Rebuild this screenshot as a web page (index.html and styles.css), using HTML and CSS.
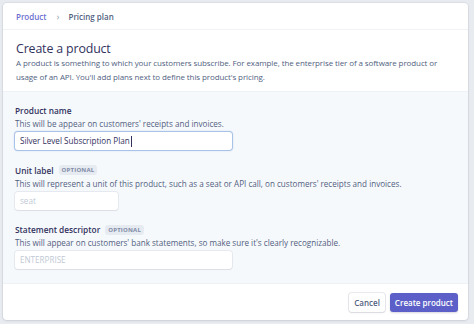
FILE: index.html
```html
<!DOCTYPE html>
<html>
<head>
<meta charset="utf-8">
<link rel="stylesheet" href="styles.css">
</head>
<body>
<div class="card">
  <div class="crumbs">
    <span class="crumb-link">Product</span>
    <span class="crumb-sep">›</span>
    <span class="crumb-current">Pricing plan</span>
  </div>
  <div class="head">
    <h1 class="title">Create a product</h1>
    <p class="intro">A product is something to which your customers subscribe. For example, the enterprise tier of a software product or usage of an API. You'll add plans next to define this product's pricing.</p>
  </div>
  <div class="form">
    <div class="field">
      <div class="label">Product name</div>
      <div class="hint">This will be appear on customers' receipts and invoices.</div>
      <div class="input input-wide input-focus">Silver Level Subscription Plan<span class="caret"></span></div>
    </div>
    <div class="field">
      <div class="label">Unit label <span class="badge">OPTIONAL</span></div>
      <div class="hint">This will represent a unit of this product, such as a seat or API call, on customers' receipts and invoices.</div>
      <div class="input input-narrow placeholder">seat</div>
    </div>
    <div class="field">
      <div class="label">Statement descriptor <span class="badge">OPTIONAL</span></div>
      <div class="hint">This will appear on customers' bank statements, so make sure it's clearly recognizable.</div>
      <div class="input input-wide placeholder">ENTERPRISE</div>
    </div>
  </div>
  <div class="footer">
    <button class="btn btn-cancel">Cancel</button>
    <button class="btn btn-primary">Create product</button>
  </div>
</div>
</body>
</html>
```
FILE: styles.css
```css
html, body {
  margin: 0;
  padding: 0;
}
body {
  background: #e8ecf1;
  font-family: "Open Sans", "Noto Sans", sans-serif;
  color: #32325d;
  width: 474px;
  height: 324px;
  padding: 3px 6px 4px 3px;
  box-sizing: border-box;
  overflow: hidden;
}
.card {
  background: #fff;
  border-radius: 4px;
  box-shadow: 0 0 0 1px rgba(50, 50, 93, 0.06), 0 1px 3px rgba(0, 0, 0, 0.08);
  height: 317px;
  display: flex;
  flex-direction: column;
  overflow: hidden;
}
.crumbs {
  height: 27px;
  flex: none;
  display: flex;
  align-items: center;
  padding-left: 13px;
  font-size: 8px;
  font-weight: 600;
  border-bottom: 1px solid #f0f2f6;
  box-sizing: border-box;
}
.crumb-link {
  color: #6b6fd0;
}
.crumb-sep {
  color: #aab2c0;
  margin: 0 9px 0 10px;
  font-size: 9px;
}
.crumb-current {
  color: #525f7f;
}
.head {
  padding: 12px 13px 7px 13px;
  flex: none;
}
.title {
  margin: 0;
  font-size: 12.4px;
  letter-spacing: -0.15px;
  font-weight: 400;
  color: #32325d;
  line-height: 14px;
}
.intro {
  margin: 0;
  font-size: 8px;
  letter-spacing: -0.1px;
  line-height: 14px;
  color: #525f7f;
}
.form {
  flex: none;
  background: #f6f9fc;
  border-top: 1px solid #eef1f6;
  border-bottom: 1px solid #eef1f6;
  padding: 12px 12px 14px 12px;
  display: flex;
  flex-direction: column;
  gap: 13.5px;
}
.field {
  display: flex;
  flex-direction: column;
}
.label {
  font-size: 8.3px;
  font-weight: 600;
  color: #32325d;
  line-height: 13px;
  display: flex;
  align-items: center;
}
.badge {
  font-size: 6px;
  font-weight: 700;
  color: #7f8aa6;
  background: #e6ebf1;
  border-radius: 3px;
  padding: 1px 3px;
  margin-left: 5px;
  letter-spacing: 0.2px;
  line-height: 8px;
}
.hint {
  font-size: 8.1px;
  line-height: 13px;
  color: #525f7f;
  margin-bottom: 2px;
}
.input {
  height: 18px;
  box-sizing: border-box;
  background: #fff;
  border-radius: 3px;
  box-shadow: 0 0 0 1px rgba(50, 50, 93, 0.08), 0 1px 1px rgba(0, 0, 0, 0.05);
  font-size: 8.1px;
  line-height: 18px;
  padding: 0 5px;
  color: #32325d;
  display: flex;
  align-items: center;
}
.input-wide {
  width: 217px;
}
.input-narrow {
  width: 103px;
}
.input-focus {
  box-shadow: 0 0 0 1px #a9c3e6, 0 0 2px 1px rgba(110, 150, 220, 0.25);
}
.caret {
  display: inline-block;
  width: 1px;
  height: 11px;
  background: #32325d;
  margin-left: 1px;
}
.placeholder {
  color: #c1c9d5;
}
.footer {
  flex: 1;
  display: flex;
  justify-content: flex-end;
  align-items: center;
  gap: 5px;
  padding-right: 10px;
  padding-top: 1px;
}
.btn {
  font-family: "Open Sans", "Noto Sans", sans-serif;
  font-size: 8px;
  font-weight: 600;
  height: 19px;
  border: none;
  border-radius: 3px;
  padding: 0 5px;
  cursor: pointer;
}
.btn-cancel {
  background: #fff;
  color: #525f7f;
  box-shadow: 0 0 0 1px rgba(50, 50, 93, 0.1), 0 1px 2px rgba(0, 0, 0, 0.08);
}
.btn-primary {
  background: #5b5fc7;
  color: #fff;
  box-shadow: 0 1px 2px rgba(50, 50, 93, 0.2);
}
```
